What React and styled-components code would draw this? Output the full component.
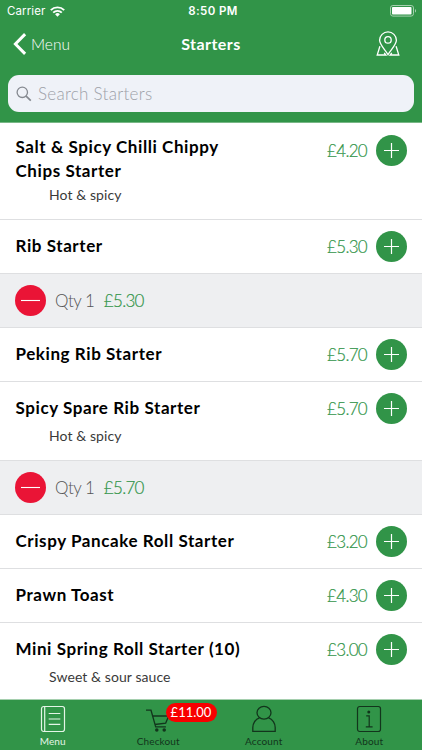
import React from 'react';
import styled, { createGlobalStyle } from 'styled-components';

const palette = {
  green: '#319448',
  red: '#ea1436',
  badge: '#f80000',
  white: '#ffffff',
  grey: '#eeeff1',
  line: '#dedfe1',
  dark: '#12351c',
};

const items = [
  { name: ['Salt & Spicy Chilli Chippy', 'Chips Starter'], note: 'Hot & spicy', price: '£4.20', height: 97, noteGap: 3 },
  { name: ['Rib Starter'], price: '£5.30', height: 54, qty: 1 },
  { name: ['Peking Rib Starter'], price: '£5.70', height: 54 },
  { name: ['Spicy Spare Rib Starter'], note: 'Hot & spicy', price: '£5.70', height: 79, noteGap: 6, qty: 1 },
  { name: ['Crispy Pancake Roll Starter'], price: '£3.20', height: 54 },
  { name: ['Prawn Toast'], price: '£4.30', height: 54 },
  { name: ['Mini Spring Roll Starter (10)'], note: 'Sweet & sour sauce', price: '£3.00', height: 77, noteGap: 6 },
];

const WifiIcon = () => (
  <svg width="15" height="11" viewBox="0 0 15 11" fill="none" stroke="#fff" strokeWidth="1.9">
    <path d="M.8 4.1a9.5 9.5 0 0 1 13.4 0" />
    <path d="M3.2 6.6a6.1 6.1 0 0 1 8.6 0" />
    <path d="M7.5 10.8 5.1 8.3a3.4 3.4 0 0 1 4.8 0z" fill="#fff" stroke="none" />
  </svg>
);

const BatteryIcon = () => (
  <svg width="27" height="12" viewBox="0 0 27 12">
    <rect x=".5" y=".5" width="23" height="10.6" rx="2.4" fill="none" stroke="#a5d0ae" />
    <rect x="2" y="2" width="19.5" height="7.6" rx=".8" fill="#fff" />
    <path d="M25 4c1.4.5 1.4 3.1 0 3.6z" fill="#a5d0ae" />
  </svg>
);

const BackIcon = () => (
  <svg width="14" height="22" viewBox="0 0 14 22" fill="none" stroke="#fff" strokeWidth="3">
    <path d="M12.1 1.1 2.4 11l9.7 9.9" />
  </svg>
);

const LocationIcon = () => (
  <svg width="24" height="26" viewBox="0 0 24 26" fill="none" stroke="#fff" strokeWidth="1.3">
    <path d="M12 23.6C9.3 19 3.6 13.7 3.6 9.3a8.4 8.4 0 0 1 16.8 0c0 4.4-5.7 9.7-8.4 14.3z" />
    <circle cx="12" cy="8.9" r="3.2" />
    <path d="M3.9 15.2 1.2 24h8.7l-1.7-2.1M20.1 15.2l2.7 8.8h-8.7l1.7-2.1" />
  </svg>
);

const SearchIcon = () => (
  <svg width="16" height="16" viewBox="0 0 16 16" fill="none" stroke="#858990" strokeWidth="1.3">
    <circle cx="6.3" cy="6.3" r="5.2" />
    <path d="m10.1 10.1 4.7 4.5" strokeWidth="1.7" />
  </svg>
);

const MenuIcon = () => (
  <svg width="26" height="28" viewBox="0 0 26 28" fill="none" stroke="currentColor" strokeWidth="1.2">
    <rect x="1.5" y="1.5" width="23" height="25" rx="2.2" />
    <path d="M4.7 1.5v25M8.7 8.5h11.6M8.7 14h11.6M8.7 19.4h11.6" />
  </svg>
);

const CartIcon = () => (
  <svg width="26" height="28" viewBox="0 0 26 28" fill="none" stroke="currentColor" strokeWidth="1.3">
    <path d="M1 5.2h5l4.7 16.7h10.2M7.7 11h16l-3 7.1L9.8 19.5" />
    <circle cx="11.8" cy="25" r="1.1" fill="currentColor" />
    <circle cx="19.2" cy="25" r="1.1" fill="currentColor" />
  </svg>
);

const AccountIcon = () => (
  <svg width="26" height="28" viewBox="0 0 26 28" fill="none" stroke="currentColor" strokeWidth="1.3">
    <ellipse cx="13" cy="7.7" rx="7" ry="6.4" />
    <path d="M8.5 12.8C4.4 14.1 1.8 18.3 1.8 22.5v3.9h22.4v-3.9c0-4.2-2.6-8.4-6.7-9.7" />
  </svg>
);

const AboutIcon = () => (
  <svg width="26" height="28" viewBox="0 0 26 28" fill="none" stroke="currentColor" strokeWidth="1.2">
    <rect x="1.5" y="1.5" width="23" height="25" rx="2.2" />
    <path d="M10.2 10.8h3v11.1M9.8 21.9h6.8" />
    <circle cx="12.8" cy="7" r=".9" fill="currentColor" />
  </svg>
);

const MenuItem = ({ item }) => {
  const twoLines = item.name.length > 1;

  return (
    <>
      <Item $height={item.height} $twoLines={twoLines}>
        <div>
          {item.name.map((line) => (
            <Name key={line}>{line}</Name>
          ))}
          {item.note && <Note $gap={item.noteGap}>{item.note}</Note>}
        </div>
        <Buy $twoLines={twoLines}>
          <Price>{item.price}</Price>
          <RoundButton aria-label="Add">
            <svg width="15" height="15" stroke="#fff" strokeWidth="1.2">
              <path d="M7.5 0v15M0 7.5h15" />
            </svg>
          </RoundButton>
        </Buy>
      </Item>
      {item.qty && (
        <Basket>
          <RoundButton $remove aria-label="Remove">
            <svg width="19" height="3" stroke="#fff" strokeWidth="1.1">
              <path d="M0 1.5h19" />
            </svg>
          </RoundButton>
          <Qty>Qty {item.qty}</Qty>
          <Price>{item.price}</Price>
        </Basket>
      )}
    </>
  );
};

const App = () => {
  return (
    <Screen>
      <GlobalStyle />
      <StatusBar>
        <Carrier>
          Carrier <WifiIcon />
        </Carrier>
        <Time>8:50 PM</Time>
        <BatteryIcon />
      </StatusBar>
      <NavBar>
        <Back>
          <BackIcon />
          <span>Menu</span>
        </Back>
        <Title>Starters</Title>
        <LocationIcon />
      </NavBar>
      <SearchArea>
        <SearchBox>
          <SearchIcon />
          <span>Search Starters</span>
        </SearchBox>
      </SearchArea>
      <List>
        {items.map((item) => (
          <MenuItem key={item.name[0]} item={item} />
        ))}
      </List>
      <TabBar>
        <Tab $active>
          <MenuIcon />
          <TabLabel>Menu</TabLabel>
        </Tab>
        <Tab>
          <CartIcon />
          <TabLabel>Checkout</TabLabel>
          <Badge>£11.00</Badge>
        </Tab>
        <Tab>
          <AccountIcon />
          <TabLabel>Account</TabLabel>
        </Tab>
        <Tab>
          <AboutIcon />
          <TabLabel>About</TabLabel>
        </Tab>
      </TabBar>
    </Screen>
  );
};

const GlobalStyle = createGlobalStyle`
  * {
    box-sizing: border-box;
  }

  body {
    margin: 0;
    font-family: Lato, 'Liberation Sans', sans-serif;
  }

  svg {
    display: block;
    flex-shrink: 0;
  }
`;

const Screen = styled.div`
  width: 422px;
  height: 750px;
  display: flex;
  flex-direction: column;
  overflow: hidden;
  background: ${palette.green};
`;

const StatusBar = styled.div`
  height: 22px;
  display: grid;
  grid-template-columns: 1fr auto 1fr;
  align-items: center;
  padding: 0 5px 0 7px;
  color: ${palette.white};
  font-family: Inter, sans-serif;
  font-size: 12px;

  > svg {
    justify-self: end;
  }
`;

const Carrier = styled.div`
  display: flex;
  align-items: center;
  gap: 5px;
  font-size: 11.5px;
  letter-spacing: 0.1px;
`;

const Time = styled.div`
  margin-left: 2px;
  font-size: 11.5px;
  font-weight: 600;
  letter-spacing: 0.4px;
`;

const NavBar = styled.div`
  height: 44px;
  display: grid;
  grid-template-columns: 1fr auto 1fr;
  align-items: center;
  padding: 0 22px 0 13px;
  color: ${palette.white};

  > svg {
    justify-self: end;
  }
`;

const Back = styled.div`
  display: flex;
  align-items: center;
  gap: 4px;
  font-size: 15.5px;
  font-weight: 300;

  span {
    margin-top: -1px;
  }
`;

const Title = styled.h1`
  margin: -2px 0 0 9px;
  font-size: 16px;
  font-weight: 700;
  letter-spacing: 0.45px;
`;

const SearchArea = styled.div`
  height: 57px;
  padding: 9px 8px 0;
  border-bottom: 1px solid #78b786;
`;

const SearchBox = styled.div`
  height: 37px;
  display: flex;
  align-items: center;
  gap: 6px;
  padding-left: 8px;
  border-radius: 11px;
  background: #eff2f8;
  color: #9da1a8;
  font-size: 17px;
  font-weight: 300;
  letter-spacing: 0.28px;
`;

const List = styled.div`
  flex: 1;
  overflow: hidden;
  background: ${palette.white};
`;

const Item = styled.div`
  height: ${({ $height }) => $height}px;
  display: flex;
  justify-content: space-between;
  padding: ${({ $twoLines }) => ($twoLines ? '12px' : '14px')} 15px 0 15.5px;
  border-bottom: 1px solid ${palette.line};

  &:last-child {
    border-bottom: 0;
  }
`;

const Name = styled.div`
  font-size: 17px;
  line-height: 23.5px;
  font-weight: 700;
  letter-spacing: 0.58px;
  white-space: nowrap;
`;

const Note = styled.div`
  margin: ${({ $gap }) => $gap}px 0 0 33.5px;
  font-size: 14px;
  line-height: 20px;
  letter-spacing: 0.08px;
  color: #3a3a3a;
`;

const Buy = styled.div`
  align-self: flex-start;
  display: flex;
  align-items: center;
  gap: 9px;
  height: 24px;
  margin-top: ${({ $twoLines }) => ($twoLines ? '3px' : '0')};
`;

const Price = styled.span`
  color: ${palette.green};
  font-size: 17px;
  font-weight: 300;
  letter-spacing: -0.7px;
  -webkit-text-stroke: 0.2px ${palette.green};
`;

const RoundButton = styled.button`
  width: 31px;
  height: 31px;
  flex-shrink: 0;
  display: flex;
  align-items: center;
  justify-content: center;
  padding: 0;
  border: 0;
  border-radius: 50%;
  background: ${({ $remove }) => ($remove ? palette.red : palette.green)};
`;

const Basket = styled.div`
  height: 54px;
  display: flex;
  align-items: center;
  padding-left: 15px;
  border-bottom: 1px solid ${palette.line};
  background: ${palette.grey};
`;

const Qty = styled.span`
  margin: 0 9.5px 0 9px;
  color: #555;
  font-size: 17px;
  font-weight: 300;
  letter-spacing: -0.5px;
`;

const TabBar = styled.div`
  height: 51px;
  display: flex;
  border-top: 1px solid #a5cfae;
`;

const Tab = styled.div`
  position: relative;
  flex: 1;
  display: flex;
  flex-direction: column;
  align-items: center;
  padding-top: 5px;
  color: ${({ $active }) => ($active ? '#e4f5e7' : palette.dark)};
`;

const TabLabel = styled.span`
  margin-top: 1px;
  font-size: 10px;
  line-height: 14px;
  letter-spacing: 0.15px;
`;

const Badge = styled.span`
  position: absolute;
  top: 3px;
  left: 60px;
  width: 51px;
  height: 19px;
  border-radius: 10px;
  background: ${palette.badge};
  color: ${palette.white};
  font-size: 13px;
  line-height: 18px;
  text-align: center;
`;

export default App;
